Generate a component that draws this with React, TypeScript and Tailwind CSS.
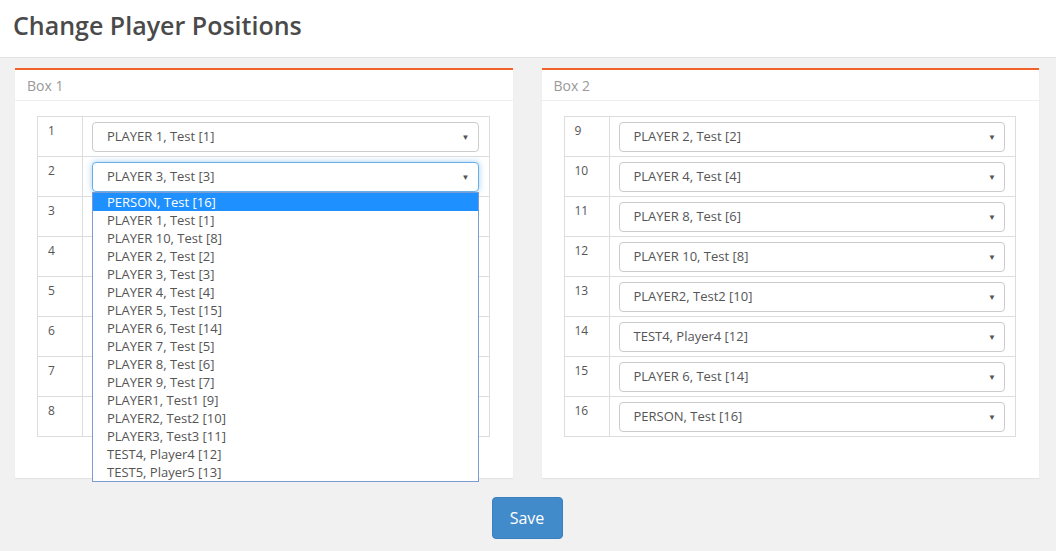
import React from 'react';

const box1 = [
  'PLAYER 1, Test [1]',
  'PLAYER 3, Test [3]',
  'PLAYER 5, Test [15]',
  'PLAYER 7, Test [5]',
  'PLAYER 9, Test [7]',
  'PLAYER1, Test1 [9]',
  'PLAYER3, Test3 [11]',
  'TEST5, Player5 [13]',
];

const box2 = [
  'PLAYER 2, Test [2]',
  'PLAYER 4, Test [4]',
  'PLAYER 8, Test [6]',
  'PLAYER 10, Test [8]',
  'PLAYER2, Test2 [10]',
  'TEST4, Player4 [12]',
  'PLAYER 6, Test [14]',
  'PERSON, Test [16]',
];

const options = [
  'PERSON, Test [16]',
  'PLAYER 1, Test [1]',
  'PLAYER 10, Test [8]',
  'PLAYER 2, Test [2]',
  'PLAYER 3, Test [3]',
  'PLAYER 4, Test [4]',
  'PLAYER 5, Test [15]',
  'PLAYER 6, Test [14]',
  'PLAYER 7, Test [5]',
  'PLAYER 8, Test [6]',
  'PLAYER 9, Test [7]',
  'PLAYER1, Test1 [9]',
  'PLAYER2, Test2 [10]',
  'PLAYER3, Test3 [11]',
  'TEST4, Player4 [12]',
  'TEST5, Player5 [13]',
];

function Select({ value, focused, open }: { value: string; focused?: boolean; open?: boolean }) {
  return (
    <div className="relative">
      <div
        className={`h-[30px] flex items-center justify-between pl-[14px] pr-[8px] rounded-[4px] bg-white text-[13px] text-[#555] border ${
          focused ? 'border-[#66afe9] shadow-[0_0_6px_rgba(102,175,233,0.6)]' : 'border-[#ccc]'
        }`}
      >
        <span>{value}</span>
        <span className="text-[8px] text-[#555]">▼</span>
      </div>
      {open && (
        <div className="absolute left-0 right-0 top-[30px] z-10 bg-white border border-[#7a9cd3] text-[13px] text-[#555]">
          {options.map((o, i) => (
            <div
              key={o}
              className={`h-[18px] leading-[18px] pl-[14px] ${i === 0 ? 'bg-[#1e90ff] text-white' : ''}`}
            >
              {o}
            </div>
          ))}
        </div>
      )}
    </div>
  );
}

function Box({ title, start, items, openIndex }: { title: string; start: number; items: string[]; openIndex?: number }) {
  return (
    <div className="bg-white border-t-2 border-[#f0622a] shadow-[0_1px_1px_rgba(0,0,0,0.05)]">
      <div className="h-[31px] flex items-center px-[12px] border-b border-[#eee] text-[14px] text-[#999]">{title}</div>
      <div className="pt-[15px] pb-[41px] pl-[22px] pr-[23px]">
        <table className="w-full border-collapse border border-[#ddd]">
          <tbody>
            {items.map((v, i) => (
              <tr key={i} className="h-[40px]">
                <td className="w-[45px] border border-[#ddd] align-top pt-[5px] pl-[10px] text-[12px] text-[#555]">
                  {start + i}
                </td>
                <td className="border border-[#ddd] pl-[9px] pr-[10px] pt-[5px] pb-[4px]">
                  <Select value={v} focused={openIndex === i} open={openIndex === i} />
                </td>
              </tr>
            ))}
          </tbody>
        </table>
      </div>
    </div>
  );
}

export default function App() {
  return (
    <div className="min-h-[551px] bg-[#f1f1f1]" style={{ fontFamily: '"Open Sans", sans-serif' }}>
      <div className="h-[58px] bg-white border-b border-[#e3e3e3] flex items-center px-[13px]">
        <h1 className="text-[25px] font-semibold text-[#4a4a4a] -mt-[6px]">Change Player Positions</h1>
      </div>
      <div className="pl-[15px] pr-[17px] pt-[10px]">
        <div className="grid grid-cols-2 gap-[29px]">
          <Box title="Box 1" start={1} items={box1} openIndex={1} />
          <Box title="Box 2" start={9} items={box2} />
        </div>
        <div className="flex justify-center pt-[19px]">
          <button className="w-[71px] h-[42px] rounded-[4px] bg-[#428bca] border border-[#3a7fc0] text-white text-[16px]">
            Save
          </button>
        </div>
      </div>
    </div>
  );
}
